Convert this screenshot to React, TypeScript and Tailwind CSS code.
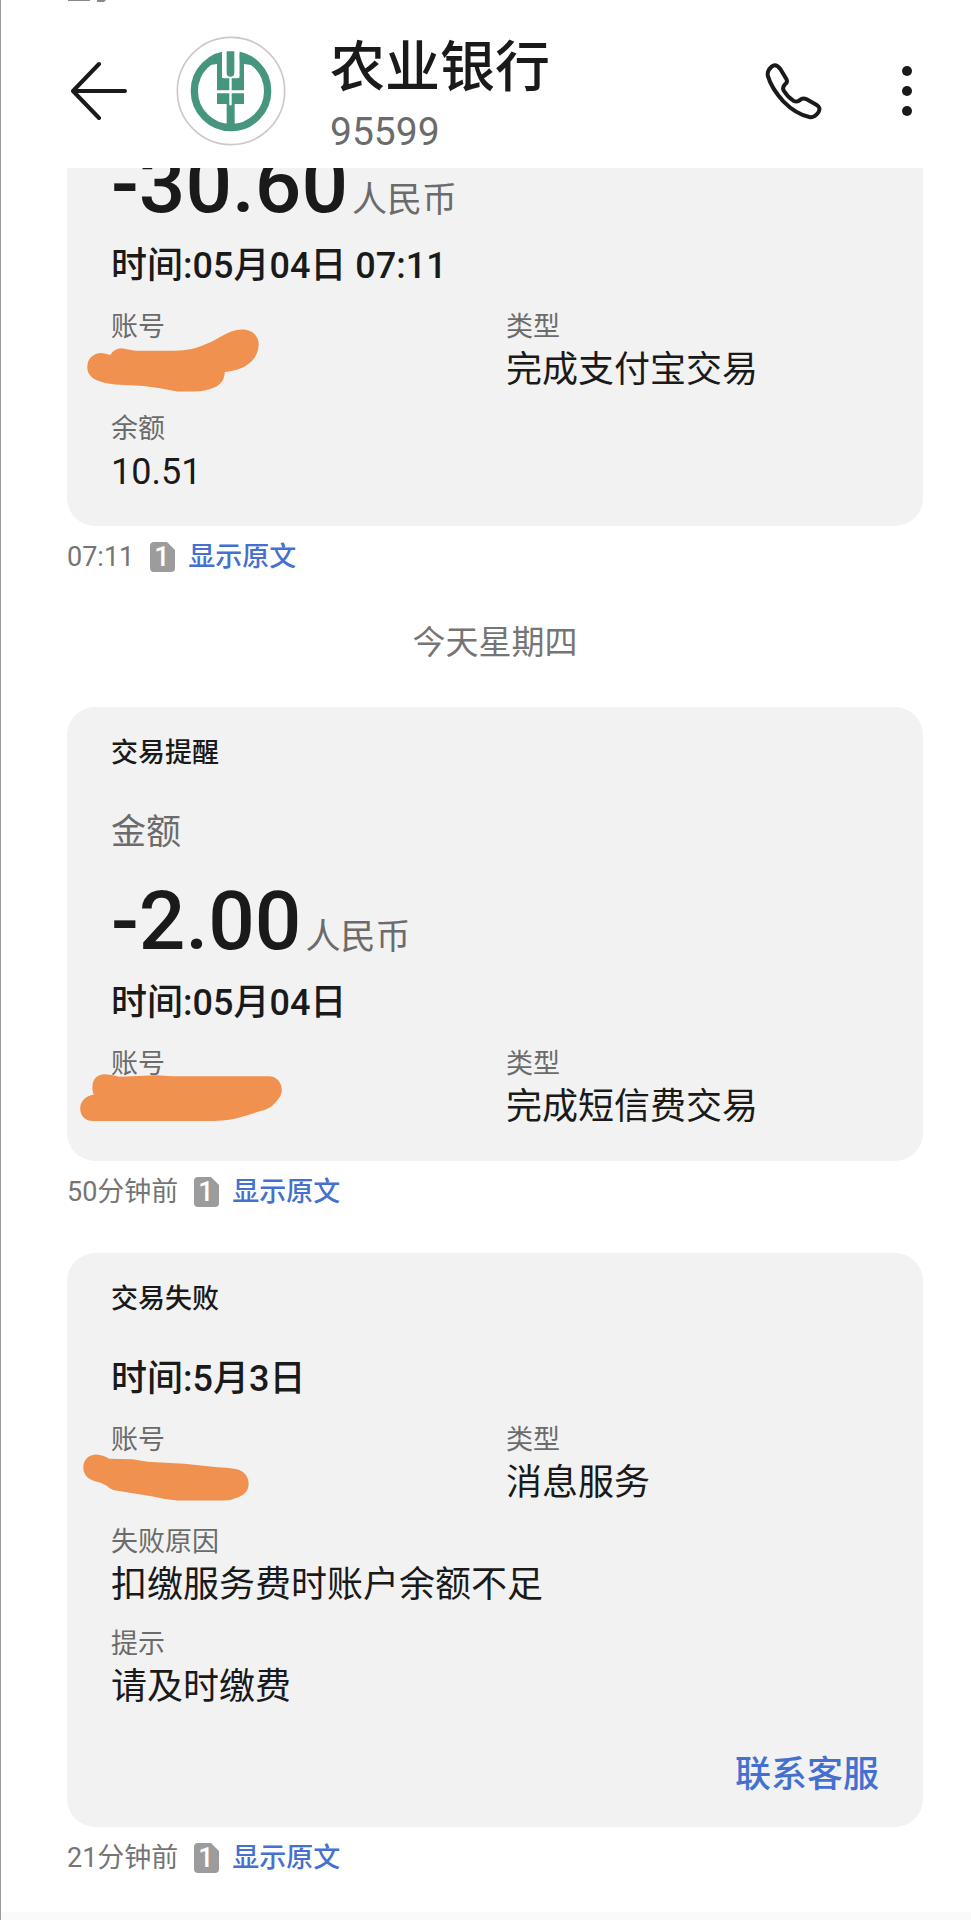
import React from 'react';

interface Scribble {
  viewBox: string;
  path: string;
  className: string;
}

interface Field {
  label: string;
  value?: string;
  scribble?: Scribble;
}

interface Message {
  id: string;
  title?: string;
  amountLabel?: string;
  amount?: string;
  time: string;
  fields: Field[];
  action?: string;
  sentAt: string;
  clipped?: boolean;
}

const SCRIBBLES: Record<string, Scribble> = {
  first: {
    viewBox: '80 328 517 189',
    path: 'M81 440C82 415 100 401 122 400Q138 401 150 406Q162 386 184 386L225 393H345Q395 391 425 378Q450 370 480 352Q515 330 545 329C575 328 597 347 596 376C595 405 578 428 553 441Q530 453 494 457C494 480 482 495 462 504Q435 516 405 516H352Q300 504 250 499L165 495Q130 490 108 481C90 472 80 460 81 440Z',
    className: 'absolute -left-6 -top-4 w-[172px] h-[63px]',
  },
  second: {
    viewBox: '90 126 611 145',
    path: 'M128 165C128 142 142 127 165 127Q185 128 210 134L320 130L370 133H660C685 133 700 152 700 175C700 190 690 202 680 213Q670 226 650 234Q620 242 585 254Q545 268 495 268H130C106 268 91 252 91 230C91 208 108 192 132 188Q127 178 128 165Z',
    className: 'absolute -left-8 -top-2 w-[204px] h-[48px]',
  },
  third: {
    viewBox: '96 368 499 141',
    path: 'M97 408C97 384 114 369 136 369Q156 370 175 382L245 384L290 391L400 397L500 408Q530 409 555 413C580 418 594 435 594 458C594 482 575 494 558 499Q540 508 520 508H380Q345 506 318 498Q280 490 245 486L205 479Q182 478 167 463Q150 453 130 449C108 443 97 428 97 408Z',
    className: 'absolute -left-7 -top-1 w-[166px] h-[47px]',
  },
};

const YESTERDAY: Message[] = [
  {
    id: 'alipay',
    amount: '-30.60',
    time: '时间:05月04日 07:11',
    fields: [
      { label: '账号', scribble: SCRIBBLES.first },
      { label: '类型', value: '完成支付宝交易' },
      { label: '余额', value: '10.51' },
    ],
    sentAt: '07:11',
    clipped: true,
  },
];

const TODAY: Message[] = [
  {
    id: 'sms-fee',
    title: '交易提醒',
    amountLabel: '金额',
    amount: '-2.00',
    time: '时间:05月04日',
    fields: [
      { label: '账号', scribble: SCRIBBLES.second },
      { label: '类型', value: '完成短信费交易' },
    ],
    sentAt: '50分钟前',
  },
  {
    id: 'failed',
    title: '交易失败',
    time: '时间:5月3日',
    fields: [
      { label: '账号', scribble: SCRIBBLES.third },
      { label: '类型', value: '消息服务' },
      { label: '失败原因', value: '扣缴服务费时账户余额不足' },
      { label: '提示', value: '请及时缴费' },
    ],
    action: '联系客服',
    sentAt: '21分钟前',
  },
];

const BankLogo = () => (
  <svg className="w-[110px] h-[110px] shrink-0" viewBox="49 46 330 330" aria-hidden="true">
    <circle cx="214" cy="211" r="161" fill="#fff" stroke="#cfc8c8" strokeWidth="5" />
    <circle cx="214" cy="211" r="110" fill="none" stroke="#45957f" strokeWidth="22" />
    <path d="M187 84H239V172H187Z" fill="#fff" />
    <path d="M187 98V172H239V98L254 118L280 134L253 130V250H172V130L146 134L172 118Z" fill="#45957f" />
    <path d="M187 88H239V166Q239 173 232 173H194Q187 173 187 166Z" fill="#fff" />
    <path d="M201 92H224V156Q224 168 212 168Q201 168 201 156Z" fill="#45957f" />
    <path d="M201 248H225V316H201Z" fill="#45957f" />
    <path d="M209 170H216V254H209Z M168 209H258V218H168Z" fill="#fff" />
  </svg>
);

const SimBadge = () => (
  <svg className="w-[25px] h-[30px] shrink-0" viewBox="0 0 25 30" aria-hidden="true">
    <path d="M4 0H17L25 8V26Q25 30 21 30H4Q0 30 0 26V4Q0 0 4 0Z" fill="#9c9c9c" />
    <text x="12" y="24" textAnchor="middle" fontSize="27" fontWeight="500" fill="#fff">1</text>
  </svg>
);

const Header = () => (
  <header className="relative flex items-center pt-[22px] pb-2 pl-[70px] pr-14 bg-white">
    <svg className="absolute left-[66px] top-0 w-[40px] h-[2px]" viewBox="0 0 40 2" fill="#8a8a8a" aria-hidden="true">
      <path d="M1 0H23V1H1Z M30 0H39L37 2H30Z" />
    </svg>
    <button aria-label="返回" className="shrink-0">
      <svg className="w-[56px] h-[60px]" viewBox="0 0 56 60" fill="none" stroke="#1a1a1a" strokeWidth="4" strokeLinecap="round" strokeLinejoin="round">
        <path d="M54 30H2M28 3L2 30L28 57" />
      </svg>
    </button>
    <div className="ml-[49px] mr-[44px]">
      <BankLogo />
    </div>
    <div className="flex-1 min-w-0 pt-2">
      <h1 className="text-[55px] leading-[74px] font-medium">农业银行</h1>
      <p className="text-[39px] leading-[56px] text-[#6b6b6b]">95599</p>
    </div>
    <button aria-label="拨打电话" className="shrink-0">
      <svg className="w-[58px] h-[58px]" viewBox="193 122 174 174" fill="none" stroke="#1a1a1a" strokeWidth="12" strokeLinejoin="round">
        <path d="M205 145Q222 119 239 143L257 173Q262 182 254 188Q243 198 250 209Q262 228 278 238Q290 244 298 236Q306 228 318 234L347 250Q362 259 353 273Q341 290 326 287Q285 278 248 240Q212 200 202 165Q199 154 205 145Z" />
      </svg>
    </button>
    <button aria-label="更多" className="shrink-0 ml-[76px]">
      <svg className="w-[16px] h-[56px]" viewBox="0 0 16 56" fill="#1a1a1a">
        <circle cx="8" cy="8" r="5" />
        <circle cx="8" cy="28" r="5" />
        <circle cx="8" cy="48" r="5" />
      </svg>
    </button>
  </header>
);

const MessageCard: React.FC<{ message: Message }> = ({ message }) => {
  const { title, amountLabel, amount, time, fields, action, sentAt, clipped } = message;

  return (
    <article>
      <div className={`bg-[#f2f2f2] px-[44px] overflow-hidden ${clipped ? 'rounded-b-[28px]' : 'rounded-[28px] pt-7'} ${action ? 'pb-[27px]' : 'pb-[29px]'}`}>
        {title && <h2 className="text-[27px] leading-9 font-medium mb-[38px]">{title}</h2>}
        {amountLabel && <p className="text-[35px] leading-[48px] text-[#6b6b6b]">{amountLabel}</p>}
        {amount && (
          <p className={`mb-[10px] flex items-baseline gap-1 ${clipped ? '-mt-8' : 'mt-4'}`}>
            <span className="text-[82px] leading-[96px] font-medium">{amount}</span>
            <span className="text-[35px] leading-10 text-[#6b6b6b]">人民币</span>
          </p>
        )}
        <p className="text-[36px] leading-[48px] font-medium">{time}</p>
        <dl className="mt-[19px] grid grid-cols-2 gap-x-[22px] gap-y-4">
          {fields.map(f => (
            <div key={f.label} className={f.label === '账号' || f.label === '类型' ? '' : 'col-span-2'}>
              <dt className="text-[27px] leading-9 text-[#6b6b6b]">{f.label}</dt>
              <dd className="relative text-[36px] leading-[50px] min-h-[50px]">
                {f.value}
                {f.scribble && (
                  <svg className={f.scribble.className} viewBox={f.scribble.viewBox} fill="#f0914f" aria-hidden="true">
                    <path d={f.scribble.path} />
                  </svg>
                )}
              </dd>
            </div>
          ))}
        </dl>
        {action && (
          <div className="mt-[38px] flex justify-end">
            <a href="#service" className="text-[36px] leading-[50px] font-medium text-[#4470d0]">{action}</a>
          </div>
        )}
      </div>
      <div className="mt-[9px] flex items-center text-[27px] leading-[44px]">
        <span className="mr-4 text-[#757575]">{sentAt}</span>
        <SimBadge />
        <a href="#original" className="ml-[13px] font-medium text-[#4470d0]">显示原文</a>
      </div>
    </article>
  );
};

export default function App() {
  return (
    <div className="min-h-screen flex flex-col bg-white border-l border-[#9a9a9a] text-[#1a1a1a] font-[Roboto,'Noto_Sans_CJK_SC',sans-serif]">
      <Header />
      <main className="flex-1 pl-[66px] pr-12 pb-7">
        {YESTERDAY.map(m => <MessageCard key={m.id} message={m} />)}
        <p className="my-10 text-center text-[33px] leading-[48px] text-[#757575]">今天星期四</p>
        <div className="flex flex-col gap-[39px]">
          {TODAY.map(m => <MessageCard key={m.id} message={m} />)}
        </div>
      </main>
      <footer className="h-2 bg-[#fafafa]" />
    </div>
  );
}
